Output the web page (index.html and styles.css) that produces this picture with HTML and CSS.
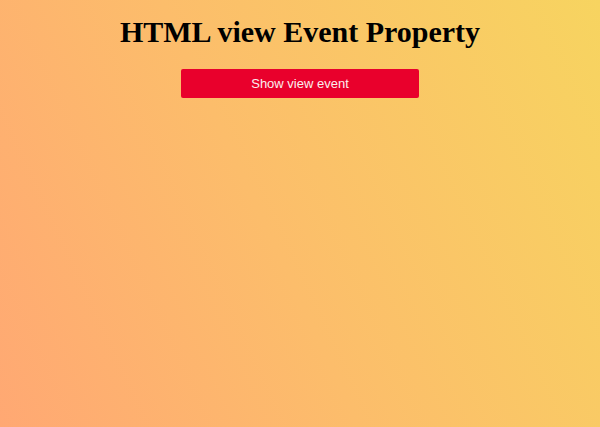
FILE: index.html
```html
<!DOCTYPE html>
<html lang="en">
<head>
<meta charset="utf-8">
<title>HTML view Event Property</title>
<link rel="stylesheet" href="styles.css">
</head>
<body>
<main class="page">
  <h1 class="title">HTML view Event Property</h1>
  <button class="show-btn" type="button">Show view event</button>
</main>
</body>
</html>
```
FILE: styles.css
```css
html, body {
  margin: 0;
  height: 100%;
}
body {
  background: linear-gradient(65deg, #ffa873 0%, #fcbd6b 45%, #f7d460 100%);
  font-family: "Liberation Serif", "Times New Roman", serif;
}
.page {
  display: flex;
  flex-direction: column;
  align-items: center;
  padding-top: 14px;
}
.title {
  margin: 0 0 20px;
  font-size: 30px;
  line-height: 35px;
  font-weight: bold;
  color: #000;
}
.show-btn {
  width: 238px;
  height: 29px;
  border: none;
  border-radius: 2px;
  background: #e9002c;
  color: #fbeeee;
  font-family: "Liberation Sans", Arial, sans-serif;
  font-size: 13px;
  padding: 0;
}
```
